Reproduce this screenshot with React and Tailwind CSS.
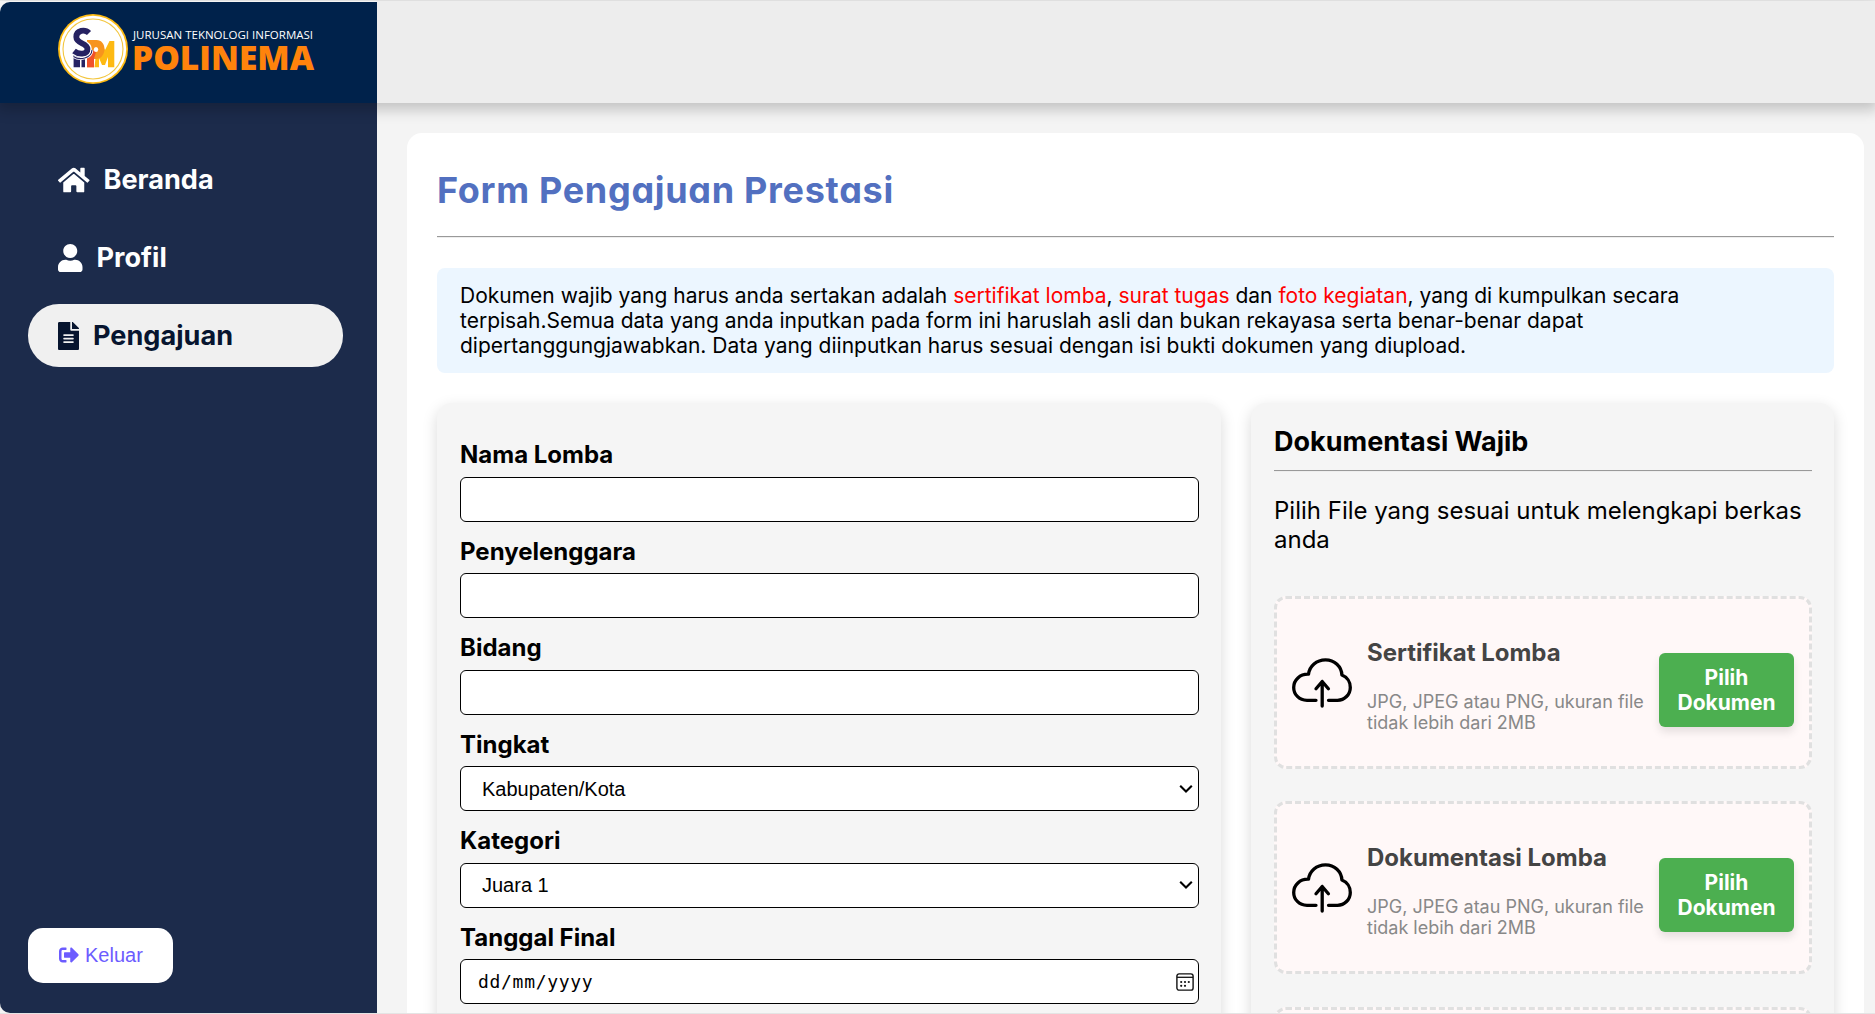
import React from "react";
import { FaHome, FaUser, FaFileAlt, FaSignOutAlt } from "react-icons/fa";

function Logo() {
  return (
    <div className="flex h-[70px] items-center">
      <svg width="70" height="70" viewBox="0 0 70 70" className="shrink-0">
        <circle cx="35" cy="35" r="35" fill="#fdbb13" />
        <circle cx="35" cy="35" r="33.2" fill="#fff" />
        <circle cx="35" cy="35" r="30" fill="none" stroke="#f3c63f" strokeWidth="1.1" />
        <path d="M56.300 27V53.300H50V43l-3 8h-3L41 44V53.300H36.500L39 30l3-3 5 9 4.500-9Z" fill="#fdb913" />
        <path d="M29 26H38.500c5 0 8 4 8 9s-3.500 10-8 10h-2.500V53.300H29Z" fill="#f7941e" />
        <path d="M38 35.500c0 5-2 8-2 9.500V53.300H29V40l5-3Z" fill="#f0522b" />
        <ellipse cx="38" cy="35.500" rx="2.200" ry="2.600" fill="#fff" />
        <path d="M15.600 41h6.400V53.300h-6.400Z M23.500 44h3.500V53.300h-3.500Z" fill="#262262" />
        <path d="M31.500 19C27 15 18.300 16 18.300 23c0 7 11.700 5.500 11.700 12 0 5.500-9 6-14 2" fill="none" stroke="#fff" strokeWidth="7.600" />
        <path d="M31 19C27 15 18.300 16 18.300 23c0 7 11.200 5.500 11.200 12 0 5.500-8.500 6-13.500 2" fill="none" stroke="#262262" strokeWidth="5.800" />
        <path d="M15.500 42.500c6 4 18 2 18.500-6.500" fill="none" stroke="#fff" strokeWidth="2.800" />
        <path d="M15.500 42.500c6 4 18 2 18.500-6.500" fill="none" stroke="#262262" strokeWidth="1.100" />
      </svg>
      <div className="mt-[3px] ml-[6px] flex flex-col gap-[1px] font-['Open_Sans'] whitespace-nowrap">
        <span className="-ml-px text-[11.500px] leading-[13px] text-white">JURUSAN TEKNOLOGI INFORMASI</span>
        <span className="-ml-[2px] text-[33.500px] leading-[31px] font-extrabold text-[#ff830c]">POLINEMA</span>
      </div>
    </div>
  );
}

function NavItem({ icon, label, active }) {
  return (
    <a
      className={`flex h-[63px] items-center gap-[14px] rounded-[31px] pl-[30px] text-[27.100px] font-[650] ${
        active ? "bg-[#f0f0f0] text-[#07152f]" : "text-white"
      }`}
    >
      {icon}
      <span className="pt-[2px]">{label}</span>
    </a>
  );
}

function Field({ label, children }) {
  return (
    <div>
      <div className="text-[24px] leading-[29px] font-bold">{label}</div>
      <div className="mt-[7.500px] flex h-[45px] items-center justify-between rounded-[6px] border border-black bg-white font-['Liberation_Sans'] text-[20px]">
        {children}
      </div>
    </div>
  );
}

function Chevron() {
  return (
    <svg width="14" height="10" viewBox="0 0 14 10" className="mr-[5px]">
      <path d="M1.200 1.800 7 7.500l5.800-5.700" fill="none" stroke="#000" strokeWidth="2.100" />
    </svg>
  );
}

function CalendarIcon() {
  return (
    <svg width="18" height="18" viewBox="0 0 18 18" className="mr-[4px]">
      <rect x=".9" y=".9" width="16.200" height="16.200" rx="2.200" fill="none" stroke="#111" strokeWidth="1.400" />
      <path d="M1 4.300h16" stroke="#111" strokeWidth="1.300" />
      <g fill="#111">
        <circle cx="5.200" cy="9" r="1.100" />
        <circle cx="9" cy="9" r="1.100" />
        <circle cx="12.800" cy="9" r="1.100" />
        <circle cx="5.200" cy="12.800" r="1.100" />
        <circle cx="9" cy="12.800" r="1.100" />
      </g>
    </svg>
  );
}

function CloudUpload() {
  return (
    <svg width="60" height="50" viewBox="0 0 60 50" fill="none" stroke="#000" strokeWidth="3.300" strokeLinecap="round" strokeLinejoin="round" className="shrink-0">
      <path d="M24 42.300H15C7 42.300 1.700 36.300 1.700 29.400 1.700 22 8 15.900 16.500 16.200 17.500 8 24.500 1.800 33.500 1.800 42.500 1.800 49.600 8.500 49.900 17 55 19 58.300 24 58.300 29.400 58.300 36.500 52.500 42.300 45.500 42.300H36.500" />
      <path d="M30.200 48V23.500M24 30.800l6.200-7.300 6.200 7.300" />
    </svg>
  );
}

function UploadBox({ children }) {
  return (
    <div className="mb-[32.300px] flex h-[173px] shrink-0 items-center rounded-[12px] border-[3px] border-dashed border-[#e0e0e0] bg-[#fff8f8] px-[15px]">
      {children}
    </div>
  );
}

function DocumentRow({ title }) {
  return (
    <UploadBox>
      <CloudUpload />
      <div className="mt-[5px] ml-[15px] w-[292px] shrink-0 whitespace-nowrap">
        <div className="text-[24px] leading-[29px] font-bold text-[#444]">{title}</div>
        <div className="mt-[24px] text-[18px] leading-[21px] text-[#888]">
          JPG, JPEG atau PNG, ukuran file
          <br />
          tidak lebih dari 2MB
        </div>
      </div>
      <button className="mt-[15px] h-[74px] w-[135px] shrink-0 rounded-[6px] bg-[#4caf50] text-center text-[21px] leading-[25px] font-bold text-white shadow-[0_5px_8px_rgba(0,0,0,0.1)]">
        Pilih
        <br />
        Dokumen
      </button>
    </UploadBox>
  );
}

export default function App() {
  return (
    <div className="flex h-[1014px] w-full flex-col overflow-hidden border-b border-[#e4e4e4] bg-[#f4f4f4] pt-px font-['Inter',sans-serif] text-black">
      <header className="relative z-10 flex h-[102px] shrink-0 bg-[#ededed] shadow-[0_4px_13px_3px_rgba(0,0,0,0.2)]">
        <div className="flex w-[377px] bg-[#f4f4f4] pt-px">
          <div className="w-full rounded-tl-[10px] bg-[#00224b] pt-[12px] pl-[58px]">
            <Logo />
          </div>
        </div>
      </header>

      <div className="flex min-h-0 flex-1">
        <aside className="flex w-[377px] shrink-0 flex-col justify-between rounded-bl-[10px] bg-[#1c2b4b] pt-[45px] pr-[34px] pb-[30px] pl-[28px]">
          <nav className="flex flex-col gap-[15px]">
            <NavItem icon={<FaHome className="h-[28px] w-[31.500px]" />} label="Beranda" />
            <NavItem icon={<FaUser className="h-[28px] w-[24.500px]" />} label="Profil" />
            <NavItem icon={<FaFileAlt className="h-[28px] w-[21px]" />} label="Pengajuan" active />
          </nav>
          <button className="flex h-[55px] w-[145px] items-center gap-[6px] rounded-[15px] bg-white pb-[2px] pl-[31px] font-['Liberation_Sans'] text-[20px] text-[#6c5cff]">
            <FaSignOutAlt className="size-[20px]" />
            <span>Keluar</span>
          </button>
        </aside>

        <main className="min-w-0 flex-1 pt-[30px] pr-[11px] pl-[30px]">
          <section className="h-[1100px] rounded-[15px] bg-white p-[30px]">
            <h1 className="text-[36px] leading-[54px] font-[680] tracking-[0.700px] text-[#5270c0] [font-feature-settings:'cv11'] [font-optical-sizing:none]">
              Form Pengajuan Prestasi
            </h1>
            <div className="mt-[19px] h-[2px] border-t border-[#999] bg-[#eee]" />
            <p className="mt-[30px] rounded-[8px] bg-[#ecf6ff] px-[23px] py-[15px] text-[21px] leading-[25px] whitespace-nowrap">
              Dokumen wajib yang harus anda sertakan adalah <span className="text-[#f00]">sertifikat lomba</span>,{" "}
              <span className="text-[#f00]">surat tugas</span> dan <span className="text-[#f00]">foto kegiatan</span>, yang
              di kumpulkan secara
              <br />
              terpisah.Semua data yang anda inputkan pada form ini haruslah asli dan bukan rekayasa serta benar-benar dapat
              <br />
              dipertanggungjawabkan. Data yang diinputkan harus sesuai dengan isi bukti dokumen yang diupload.
            </p>

            <div className="mt-[30px] flex gap-[30px]">
              <form className="flex h-[800px] w-[784px] shrink-0 flex-col gap-[14.950px] rounded-[15px] bg-[#f5f5f5] pt-[37.400px] pr-[22px] pl-[23px] shadow-[0_5px_15px_rgba(0,0,0,0.15)]">
                <Field label="Nama Lomba" />
                <Field label="Penyelenggara" />
                <Field label="Bidang" />
                <Field label="Tingkat">
                  <span className="pl-[21px]">Kabupaten/Kota</span>
                  <Chevron />
                </Field>
                <Field label="Kategori">
                  <span className="pl-[21px]">Juara 1</span>
                  <Chevron />
                </Field>
                <Field label="Tanggal Final">
                  <span className="pl-[17px] font-['DejaVu_Sans_Mono'] text-[18px] tracking-[0.700px]">dd/mm/yyyy</span>
                  <CalendarIcon />
                </Field>
              </form>

              <section className="h-[800px] min-w-0 flex-1 rounded-[15px] bg-[#f5f5f5] pt-[22px] pr-[22px] pl-[23px] shadow-[0_5px_15px_rgba(0,0,0,0.15)]">
                <h2 className="text-[27px] leading-[33px] font-bold">Dokumentasi Wajib</h2>
                <div className="mt-[12px] h-[2px] border-t border-[#999] bg-[#eee]" />
                <p className="mt-[24px] mb-[42px] text-[24px] leading-[29px] whitespace-nowrap">
                  Pilih File yang sesuai untuk melengkapi berkas
                  <br />
                  anda
                </p>
                <DocumentRow title="Sertifikat Lomba" />
                <DocumentRow title="Dokumentasi Lomba" />
                <UploadBox />
              </section>
            </div>
          </section>
        </main>
      </div>
    </div>
  );
}
